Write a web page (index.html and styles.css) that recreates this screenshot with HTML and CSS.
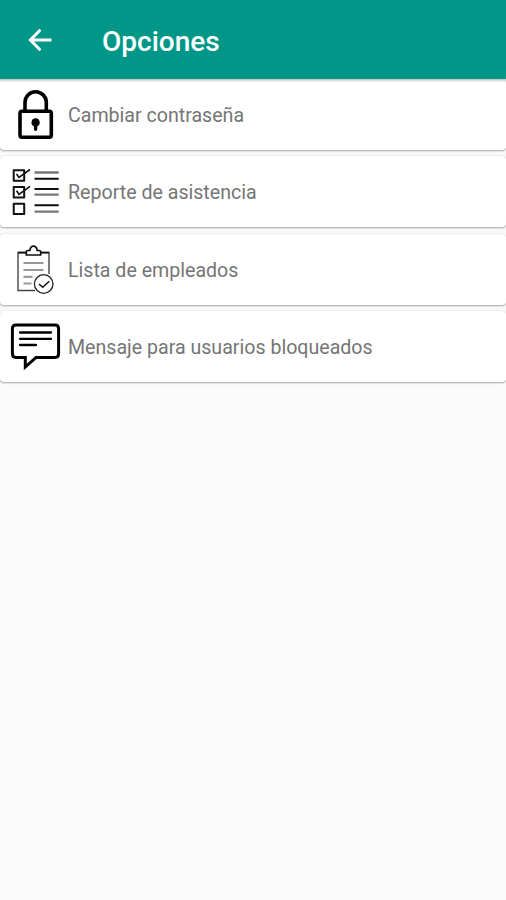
FILE: index.html
```html
<!DOCTYPE html>
<html lang="es">
<head>
<meta charset="utf-8">
<title>Opciones</title>
<link rel="stylesheet" href="styles.css">
</head>
<body>
<header class="toolbar">
  <svg class="back" viewBox="0 0 24 24"><path d="M23.500 10.400H6L13.400 2.700 11.400.7.200 12l11.200 11.300 2-2L6 13.600h17.500z"/></svg>
  <h1 class="title">Opciones</h1>
</header>
<main class="list">
  <a class="card">
    <svg class="icon" viewBox="0 0 68 71">
      <path class="line heavy" d="M25 32V23.500c0-6 4.500-10.700 10.500-10.700S46.300 17.500 46.300 23.500V32"/>
      <rect class="line heavy" x="20" y="32.200" width="31.300" height="26" rx="2"/>
      <path d="M35.600 39.300a4.200 4.200 0 0 1 1.700 8v3q0 1.700-1.700 1.700t-1.700-1.700v-3a4.200 4.200 0 0 1 1.700-8z"/>
    </svg>
    <span class="label">Cambiar contraseña</span>
  </a>
  <a class="card">
    <svg class="icon" viewBox="0 0 68 71">
      <path class="line box" d="M13.700 14.300h10.500v10.500H13.700zM13.700 31h10.500v10.500H13.700zM13.700 47.700h10.500V58H13.700z"/>
      <path class="line check" d="M16.500 18l2.500 3.500 11-8M16.500 34.800l2.500 3.500 11-8"/>
      <path class="line gray" d="M34.500 16.500h24.200M34.500 38.700h24.200M34.500 55.700h24.200"/>
      <path class="line bar" d="M34.500 22.700h24.200M34.500 33h24.200M34.500 49.300h24.200"/>
    </svg>
    <span class="label">Reporte de asistencia</span>
  </a>
  <a class="card">
    <svg class="icon" viewBox="0 0 68 71">
      <path class="line sheet" d="M26 18.500h-8V56.500h17M41 18.500h8V40"/>
      <path class="line clip" d="M18 18.700h8M41 18.700h8M26.300 21v-3q0-1.500 1.500-1.500h2q.7-4.300 3.700-4.300t3.700 4.300h2q1.500 0 1.500 1.500v3z"/>
      <path class="line rows" d="M23.500 29h20M23.500 36h20M23.500 42.800h9M23.500 49.500h8"/>
      <circle class="line seal" cx="43.700" cy="50" r="9.300"/>
      <path class="line tick" d="M39 50l3.700 3.300 6.600-6"/>
    </svg>
    <span class="label">Lista de empleados</span>
  </a>
  <a class="card">
    <svg class="icon" viewBox="0 0 68 71">
      <path class="line bubble" d="M16 13.900h39q3.600 0 3.600 3.800v25q0 3.700-3.600 3.700H36L25.300 56V46.400H16q-3.600 0-3.600-3.700v-25q0-3.800 3.600-3.800z"/>
      <path class="line message" d="M20 21.500h31M20 27.800h31M20 34h16"/>
    </svg>
    <span class="label">Mensaje para usuarios bloqueados</span>
  </a>
</main>
</body>
</html>
```

FILE: styles.css
```css
* { box-sizing: border-box; }
body {
  margin: 0;
  min-height: 900px;
  background: #fafafa;
  font-family: Roboto, "Liberation Sans", sans-serif;
}
.toolbar {
  position: relative;
  display: flex;
  align-items: center;
  gap: 50px;
  height: 79px;
  padding: 1px 28px 0;
  background: #009788;
  box-shadow: 0 1px 3px rgba(0, 0, 0, .35);
}
.back { width: 24px; height: 24px; fill: #fff; }
.title {
  margin: 3px 0 0;
  color: #fff;
  font-size: 28px;
  font-weight: 500;
  line-height: 32px;
}
.list { display: flex; flex-direction: column; gap: 6.300px; }
.card {
  display: flex;
  align-items: center;
  height: 71px;
  background: #fff;
  border-radius: 4px;
  box-shadow: 0 1px 2px rgba(0, 0, 0, .32), 0 0 2px rgba(0, 0, 0, .12);
}
.icon { flex: none; width: 68px; height: 71px; }
.line { fill: none; stroke: #111; stroke-width: 1.500px; }
.heavy { stroke: #000; stroke-width: 3.600px; }
.box { stroke-width: 2px; stroke-linejoin: round; }
.check { stroke-width: 1.600px; }
.gray { stroke: #777; stroke-width: 2.300px; }
.bar { stroke-width: 2px; }
.sheet { stroke: #444; stroke-width: 1.400px; }
.clip { stroke-width: 1.700px; }
.rows { stroke: #999; stroke-width: 2.200px; }
.seal { fill: #fff; stroke: #222; stroke-width: 1.300px; }
.tick { stroke-width: 1.500px; }
.bubble { stroke: #000; stroke-width: 3px; }
.message { stroke: #000; stroke-width: 2.300px; stroke-linecap: round; }
.label {
  padding-top: 3.400px;
  color: #757575;
  font-size: 19.600px;
  line-height: 24px;
}
```
